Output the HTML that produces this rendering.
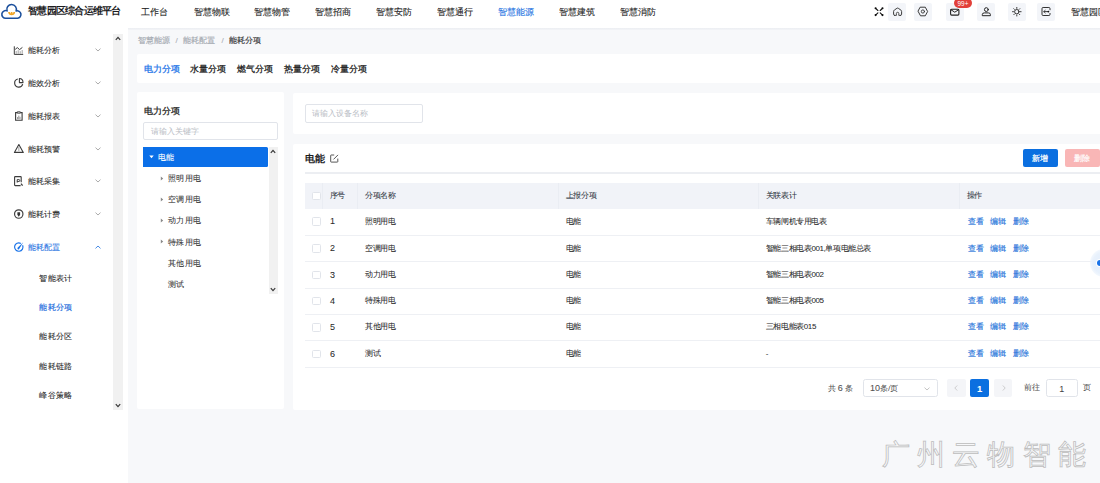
<!DOCTYPE html>
<html><head><meta charset="utf-8">
<style>
html,body{margin:0;padding:0;width:1100px;height:483px;overflow:hidden;background:#fff;font-family:"Liberation Sans",sans-serif;}
.a{position:absolute;}
.t{position:absolute;white-space:nowrap;line-height:12px;}
#hdr{left:0;top:0;width:1100px;height:28px;background:#fff;}
.nav{font-size:9.17px;color:#222;-webkit-text-stroke-width:0.1px;}
.ibox{position:absolute;top:2.6px;width:18px;height:18px;background:#f3f5f9;border-radius:2px;}
.ibox svg{position:absolute;left:3px;top:3px;}
#side{left:0;top:28px;width:128px;height:455px;background:#fff;}
.mi{font-size:8.1px;color:#2a2a2a;-webkit-text-stroke-width:0.08px;}
.chev{position:absolute;}
#main{left:128px;top:28px;width:972px;height:455px;background:#f7f8fa;}
.card{position:absolute;background:#fff;border-radius:2px;}
.bc{font-size:8.1px;color:#a3a8b0;-webkit-text-stroke-width:0.15px;}
.tab{font-size:9.17px;color:#1a1a1a;-webkit-text-stroke-width:0.25px;}
.tr{font-size:8.1px;letter-spacing:0.25px;color:#3a3a3a;-webkit-text-stroke-width:0.08px;}
.th{font-size:8.02px;color:#2d3440;-webkit-text-stroke-width:0.05px;letter-spacing:-0.3px;}
.td{font-size:8.02px;color:#2a2a2a;-webkit-text-stroke-width:0.05px;letter-spacing:-0.4px;}
.op{font-size:8.02px;color:#1a6fd9;-webkit-text-stroke-width:0.12px;}
.cb{position:absolute;left:312.2px;width:8.6px;height:8.6px;border:0.7px solid #e1e4ea;border-radius:1.5px;box-sizing:border-box;background:#fff;}
.rowline{position:absolute;left:305.3px;width:795px;height:0.8px;background:#eef0f4;}
.colsep{position:absolute;top:183px;width:0.8px;height:25.6px;background:#eaedf3;}
</style></head>
<body>
<!-- HEADER -->
<div id="hdr" class="a">
  <svg class="a" style="left:0px;top:0px" width="24" height="22" viewBox="0 0 24 22">
    <path d="M5.8 18.2 A3.8 3.8 0 1 1 7.1 10.9 A4.8 4.8 0 1 1 16.1 11 A3.7 3.7 0 1 1 17.6 18.2 Z" fill="none" stroke="#1b4f9c" stroke-width="1.55" stroke-linejoin="round"/>
    <path d="M8.1 11.9 L15.2 11.9 A3.6 3.9 0 0 1 8.1 11.9 Z" fill="#f0a322"/>
    <path d="M10.3 11.6 L10.6 13.3 M13 11.6 L12.7 13.3" stroke="#fff" stroke-width="0.8"/>
  </svg>
  <div class="t" style="left:28px;top:5px;font-size:10px;letter-spacing:-0.75px;font-weight:bold;color:#1d1d1f;">智慧园区综合运维平台</div>
  <div class="t nav" style="left:141px;top:6px">工作台</div>
  <div class="t nav" style="left:193.5px;top:6px">智慧物联</div>
  <div class="t nav" style="left:254.3px;top:6px">智慧物管</div>
  <div class="t nav" style="left:315px;top:6px">智慧招商</div>
  <div class="t nav" style="left:376.2px;top:6px">智慧安防</div>
  <div class="t nav" style="left:437px;top:6px">智慧通行</div>
  <div class="t nav" style="left:498px;top:6px;color:#1a6fdf">智慧能源</div>
  <div class="t nav" style="left:558.8px;top:6px">智慧建筑</div>
  <div class="t nav" style="left:619.5px;top:6px">智慧消防</div>

  <!-- header icons -->
  <div class="ibox" style="left:888.2px;width:17.9px;height:18px"></div>
  <div class="ibox" style="left:914.3px;width:17.9px;height:18px"></div>
  <div class="ibox" style="left:945.8px;width:17.8px;height:18px"></div>
  <div class="ibox" style="left:977.3px;width:17.6px;height:18px"></div>
  <div class="ibox" style="left:1007.8px;width:17.8px;height:18px"></div>
  <div class="ibox" style="left:1037px;width:17.7px;height:18px"></div>
  <svg class="a" style="left:860px;top:0" width="200" height="28" viewBox="860 0 200 28">
   <g stroke="#111" stroke-linecap="round" fill="none">
    <path d="M875.6 8.3 L877.9 10.5 M882.5 8.3 L880.2 10.5 M875.6 15.1 L877.9 12.9 M882.5 15.1 L880.2 12.9" stroke-width="1.1"/>
   </g>
   <g fill="#111">
    <circle cx="875.6" cy="8.3" r="1.05"/><circle cx="882.5" cy="8.3" r="1.05"/>
    <circle cx="875.6" cy="15.1" r="1.05"/><circle cx="882.5" cy="15.1" r="1.05"/>
   </g>
   <g fill="none" stroke="#3a3a3a" stroke-width="1" stroke-linejoin="round" stroke-linecap="round">
    <path d="M894.6 15.4 Q893.6 15.4 893.6 14.3 L893.6 11.4 Q893.6 10.6 894.3 10.1 L896.9 8.3 Q897.6 7.8 898.3 8.3 L900.9 10.1 Q901.6 10.6 901.6 11.4 L901.6 14.3 Q901.6 15.4 900.6 15.4"/>
    <path d="M894.6 15.4 L896.4 15.4 L896.4 13.4 Q896.4 12.3 897.6 12.3 Q898.8 12.3 898.8 13.4 L898.8 15.4 L900.6 15.4" stroke-width="0.9"/>
    <path d="M920.5 7.2 L925.3 7.2 L927.6 11.5 L925.3 15.8 L920.5 15.8 L918.2 11.5 Z"/>
    <circle cx="922.9" cy="11.5" r="1.6" stroke-width="0.95"/>
    <rect x="950.6" y="9.2" width="8.3" height="5.9" rx="1" stroke="#222" stroke-width="1.1"/>
    <path d="M951 9.8 L954.75 12.2 L958.5 9.8" stroke="#222" stroke-width="1"/>
    <circle cx="986.35" cy="9.6" r="1.9" stroke="#222"/>
    <path d="M982.3 15.3 L982.3 14.6 Q982.3 12.9 984.3 12.9 L988.4 12.9 Q990.4 12.9 990.4 14.6 L990.4 15.3 Z" stroke="#222"/>
    <circle cx="1016.8" cy="11.7" r="2.2" stroke="#333"/>
    <path d="M1016.8 7.4 L1016.8 8.4 M1016.8 15 L1016.8 16 M1012.5 11.7 L1013.5 11.7 M1020.1 11.7 L1021.1 11.7 M1013.8 8.7 L1014.5 9.4 M1019.1 14 L1019.8 14.7 M1013.8 14.7 L1014.5 14 M1019.1 9.4 L1019.8 8.7" stroke="#333" stroke-width="0.95"/>
    <path d="M1050 9.8 L1050 8.6 Q1050 7.5 1048.9 7.5 L1043.1 7.5 Q1042 7.5 1042 8.6 L1042 14.4 Q1042 15.5 1043.1 15.5 L1048.9 15.5 Q1050 15.5 1050 14.4 L1050 13.4" stroke="#333"/>
    <path d="M1043.8 11.6 L1048.6 11.6" stroke="#333" stroke-width="0.95"/>
    <path d="M1045.2 10.3 L1043.8 11.6 L1045.2 12.9" stroke="#333" stroke-width="0.9"/>
   </g>
   <circle cx="1048.4" cy="11.6" r="0.9" fill="#111"/>
  </svg>
  <div class="a" style="left:953.9px;top:-1.6px;width:18.3px;height:9.5px;border-radius:5px;background:#e2403a;color:#fff;font-size:6.4px;line-height:11.2px;text-align:center;letter-spacing:0.1px">99+</div>
  <div class="t nav" style="left:1071.4px;top:6.3px;font-size:8.6px">智慧园区</div>
</div>

<!-- SIDEBAR -->
<div id="side" class="a"></div>
<div class="a" style="left:112.5px;top:34px;width:10px;height:375.5px;background:#f1f1f1"></div>
<svg class="a" style="left:114.5px;top:36px" width="6" height="5" viewBox="0 0 6 5"><path d="M0.8 3.8 L3 1.4 L5.2 3.8" fill="none" stroke="#3a3a3a" stroke-width="1.25"/></svg>
<svg class="a" style="left:114.5px;top:402.5px" width="6" height="5" viewBox="0 0 6 5"><path d="M0.8 1.2 L3 3.6 L5.2 1.2" fill="none" stroke="#3a3a3a" stroke-width="1.25"/></svg>

<!-- menu icons -->
<svg class="a" style="left:0;top:0" width="30" height="260" viewBox="0 0 30 260">
 <g fill="none" stroke="#3c3c3c" stroke-width="1">
  <path d="M14.3 46.3 L14.3 54.4 L23.2 54.4"/>
  <path d="M15.2 49.4 L17.3 47.6 L19.6 49.6 L22.4 47.4"/>
  <path d="M16.2 53.8 L16.2 51 M18.2 53.8 L18.2 50.2 M20.2 53.8 L20.2 51.2 M22.2 53.8 L22.2 50" stroke="#9a9a9a" stroke-width="0.9"/>
  <path d="M17.8 79 A4.1 4.1 0 1 0 22.7 84.1" stroke-width="1.15"/>
  <path d="M19.4 78.5 L19.4 82.6 L23 82.6 Q23 78.5 19.4 78.5 Z" stroke-width="1.1" stroke-linejoin="round"/>
  <path d="M17.2 112.6 L15.6 112.6 L15.6 120.2 L22.1 120.2 L22.1 112.6 L20.4 112.6" stroke-width="1.1"/>
  <path d="M17.3 111.8 L20.3 111.8 L20.3 113.2 L17.3 113.2 Z" stroke-width="0.9"/>
  <path d="M17.6 119.2 L17.6 117 M18.8 119.2 L18.8 115.6 M20 119.2 L20 116.8" stroke="#8a8a8a" stroke-width="0.9"/>
  <path d="M18.85 144.6 L23.3 152.4 L14.4 152.4 Z" stroke-width="1.1" stroke-linejoin="round"/>
  <path d="M18.85 147 L18.85 151" stroke="#9a9a9a" stroke-width="0.9"/>
  <path d="M20.6 185.6 L15.2 185.6 Q14.6 185.6 14.6 185 L14.6 177.2 Q14.6 176.6 15.2 176.6 L20.6 176.6 Q21.2 176.6 21.2 177.2 L21.2 182.2" stroke-width="1.1"/>
  <path d="M17.2 182.6 L17.2 179.6 L18.9 179.6 Q19.8 179.6 19.8 180.6 Q19.8 181.5 18.9 181.5 L17.2 181.5" stroke-width="1"/>
  <path d="M21 183.6 L22.6 185.6" stroke-width="1.3"/>
  <circle cx="18.75" cy="214" r="4.2" stroke-width="1.15"/>
 </g>
 <path d="M17.4 212.2 L20.1 212.2 L20.1 214.8 L18.75 216.8 L17.4 214.8 Z" fill="#333"/>
 <path d="M20.85 243.4 A4.2 4.2 0 1 0 22.6 245.3" fill="none" stroke="#1a73e8" stroke-width="1.2"/>
 <path d="M17.3 248 L23.3 242.3 L18.8 249.5 Q17.6 249.6 17.3 248 Z" fill="#1a73e8"/>
</svg>
<div class="t mi" style="left:28px;top:45px">能耗分析</div>
<div class="t mi" style="left:28px;top:77.9px">能效分析</div>
<div class="t mi" style="left:28px;top:110.5px">能耗报表</div>
<div class="t mi" style="left:28px;top:143.5px">能耗预警</div>
<div class="t mi" style="left:28px;top:176px">能耗采集</div>
<div class="t mi" style="left:28px;top:208.5px">能耗计费</div>
<div class="t mi" style="left:28px;top:241.5px;color:#1a6fdf">能耗配置</div>

<svg class="a" style="left:94.5px;top:48px" width="6" height="4" viewBox="0 0 6 4"><path d="M0.5 0.6 L3 3 L5.5 0.6" fill="none" stroke="#888" stroke-width="0.7"/></svg>
<svg class="a" style="left:94.5px;top:81px" width="6" height="4" viewBox="0 0 6 4"><path d="M0.5 0.6 L3 3 L5.5 0.6" fill="none" stroke="#888" stroke-width="0.7"/></svg>
<svg class="a" style="left:94.5px;top:113.5px" width="6" height="4" viewBox="0 0 6 4"><path d="M0.5 0.6 L3 3 L5.5 0.6" fill="none" stroke="#888" stroke-width="0.7"/></svg>
<svg class="a" style="left:94.5px;top:146.5px" width="6" height="4" viewBox="0 0 6 4"><path d="M0.5 0.6 L3 3 L5.5 0.6" fill="none" stroke="#888" stroke-width="0.7"/></svg>
<svg class="a" style="left:94.5px;top:179px" width="6" height="4" viewBox="0 0 6 4"><path d="M0.5 0.6 L3 3 L5.5 0.6" fill="none" stroke="#888" stroke-width="0.7"/></svg>
<svg class="a" style="left:94.5px;top:211.5px" width="6" height="4" viewBox="0 0 6 4"><path d="M0.5 0.6 L3 3 L5.5 0.6" fill="none" stroke="#888" stroke-width="0.7"/></svg>
<svg class="a" style="left:94.5px;top:244.5px" width="6" height="4" viewBox="0 0 6 4"><path d="M0.5 3.4 L3 1 L5.5 3.4" fill="none" stroke="#1a6fdf" stroke-width="0.8"/></svg>

<div class="t mi" style="left:39.3px;top:273px;font-size:7.6px;letter-spacing:0.25px">智能表计</div>
<div class="t mi" style="left:39.3px;top:301.6px;font-size:7.6px;letter-spacing:0.25px;color:#1668dc;-webkit-text-stroke-width:0.15px">能耗分项</div>
<div class="t mi" style="left:39.3px;top:330.7px;font-size:7.6px;letter-spacing:0.25px">能耗分区</div>
<div class="t mi" style="left:39.3px;top:360.8px;font-size:7.6px;letter-spacing:0.25px">能耗链路</div>
<div class="t mi" style="left:39.3px;top:389.9px;font-size:7.6px;letter-spacing:0.25px">峰谷策略</div>

<!-- MAIN -->
<div id="main" class="a"></div>
<div class="a" style="left:128px;top:28px;width:972px;height:2px;background:linear-gradient(#eceef2,#f3f4f7)"></div>
<div class="t bc" style="left:137.9px;top:35.3px">智慧能源</div>
<div class="t bc" style="left:175.6px;top:35.3px;color:#b0b4ba">/</div>
<div class="t bc" style="left:183.4px;top:35.3px">能耗配置</div>
<div class="t bc" style="left:221.4px;top:35.3px;color:#b0b4ba">/</div>
<div class="t bc" style="left:229px;top:35.3px;color:#303133">能耗分项</div>

<div class="card" style="left:137.2px;top:53.8px;width:980px;height:29px"></div>
<div class="t tab" style="left:143.5px;top:63.2px;color:#1a73e8">电力分项</div>
<div class="t tab" style="left:190px;top:63.2px">水量分项</div>
<div class="t tab" style="left:236.6px;top:63.2px">燃气分项</div>
<div class="t tab" style="left:283.6px;top:63.2px">热量分项</div>
<div class="t tab" style="left:330.5px;top:63.2px">冷量分项</div>

<!-- tree card -->
<div class="card" style="left:137.2px;top:92px;width:147.2px;height:317px"></div>
<div class="t tab" style="left:143.5px;top:104.8px;font-size:9px;color:#222">电力分项</div>
<div class="a" style="left:143.3px;top:121.8px;width:135.2px;height:18.5px;border:0.8px solid #e1e4ea;border-radius:2px;box-sizing:border-box"></div>
<div class="t" style="left:150.5px;top:125.6px;font-size:7.6px;color:#b8bcc4">请输入关键字</div>
<div class="a" style="left:143.3px;top:146.5px;width:124.8px;height:20.7px;background:#0b6fe8;border-radius:0 1.5px 1.5px 0"></div>
<svg class="a" style="left:148.5px;top:155px" width="5" height="4" viewBox="0 0 5 4"><path d="M0.3 0.6 L4.7 0.6 L2.5 3.3 Z" fill="#fff"/></svg>
<div class="t tr" style="left:157.8px;top:151.5px;color:#fff">电能</div>
<div class="a" style="left:268.5px;top:146.5px;width:9.8px;height:147.1px;background:#f1f1f1"></div>
<svg class="a" style="left:270.4px;top:148.8px" width="6" height="5" viewBox="0 0 6 5"><path d="M0.8 3.8 L3 1.4 L5.2 3.8" fill="none" stroke="#3a3a3a" stroke-width="1.25"/></svg>
<svg class="a" style="left:270.4px;top:286.8px" width="6" height="5" viewBox="0 0 6 5"><path d="M0.8 1.2 L3 3.6 L5.2 1.2" fill="none" stroke="#3a3a3a" stroke-width="1.25"/></svg>

<svg class="a" style="left:159.6px;top:175.6px" width="4" height="5" viewBox="0 0 4 5"><path d="M0.8 0.4 L3.2 2.5 L0.8 4.6 Z" fill="#888"/></svg>
<svg class="a" style="left:159.6px;top:196.7px" width="4" height="5" viewBox="0 0 4 5"><path d="M0.8 0.4 L3.2 2.5 L0.8 4.6 Z" fill="#888"/></svg>
<svg class="a" style="left:159.6px;top:218.2px" width="4" height="5" viewBox="0 0 4 5"><path d="M0.8 0.4 L3.2 2.5 L0.8 4.6 Z" fill="#888"/></svg>
<svg class="a" style="left:159.6px;top:239.3px" width="4" height="5" viewBox="0 0 4 5"><path d="M0.8 0.4 L3.2 2.5 L0.8 4.6 Z" fill="#888"/></svg>
<div class="t tr" style="left:168.1px;top:172.8px">照明用电</div>
<div class="t tr" style="left:168.1px;top:193.9px">空调用电</div>
<div class="t tr" style="left:168.1px;top:215.4px">动力用电</div>
<div class="t tr" style="left:168.1px;top:236.5px">特殊用电</div>
<div class="t tr" style="left:168.1px;top:257.6px">其他用电</div>
<div class="t tr" style="left:168.1px;top:278.5px">测试</div>

<!-- search card -->
<div class="card" style="left:293.3px;top:92.7px;width:820px;height:41.6px"></div>
<div class="a" style="left:305.3px;top:104.3px;width:117.4px;height:18.6px;border:0.8px solid #e1e4ea;border-radius:2px;box-sizing:border-box"></div>
<div class="t" style="left:311.9px;top:108.1px;font-size:7.6px;color:#b8bcc4">请输入设备名称</div>

<!-- table card -->
<div class="card" style="left:293.3px;top:144px;width:820px;height:265.5px"></div>
<div class="t" style="left:305.3px;top:153px;font-size:9.6px;font-weight:bold;color:#1d1d1f">电能</div>
<svg class="a" style="left:329.5px;top:153.8px" width="9" height="9" viewBox="0 0 9 9"><path d="M4.2 1 L1.2 1 Q0.7 1 0.7 1.5 L0.7 7.6 Q0.7 8.1 1.2 8.1 L7.3 8.1 Q7.8 8.1 7.8 7.6 L7.8 4.6" fill="none" stroke="#444" stroke-width="0.9"/><path d="M3.5 5.4 L8 0.9" stroke="#444" stroke-width="0.9"/></svg>
<div class="a" style="left:1022.8px;top:148.7px;width:35.2px;height:18.6px;background:#0b6fe0;border-radius:2px;color:#fff;font-size:8.02px;line-height:19.6px;text-align:center;-webkit-text-stroke-width:0.2px">新增</div>
<div class="a" style="left:1064.8px;top:148.7px;width:35.2px;height:18.6px;background:#f9b6b6;border-radius:2px;color:#fff;font-size:8.02px;line-height:19.6px;text-align:center;-webkit-text-stroke-width:0.2px">删除</div>
<div class="a" style="left:305.3px;top:172.4px;width:800px;height:1.4px;background:#eceef2"></div>

<div class="a" style="left:305.3px;top:183px;width:800px;height:25.6px;background:#f1f3f8"></div>
<div class="colsep" style="left:321.6px"></div>
<div class="colsep" style="left:357.2px"></div>
<div class="colsep" style="left:557.9px"></div>
<div class="colsep" style="left:757.9px"></div>
<div class="colsep" style="left:958.7px"></div>
<div class="cb" style="top:191.8px"></div>
<div class="t th" style="left:329.8px;top:190px">序号</div>
<div class="t th" style="left:365px;top:190px">分项名称</div>
<div class="t th" style="left:565.6px;top:190px">上报分项</div>
<div class="t th" style="left:765.8px;top:190px">关联表计</div>
<div class="t th" style="left:966.5px;top:190px">操作</div>

<!-- rows -->
<div class="cb" style="top:217.4px"></div>
<div class="t td" style="left:330px;top:215.4px;font-size:9px">1</div>
<div class="t td" style="left:365px;top:215.6px">照明用电</div>
<div class="t td" style="left:565.6px;top:215.6px">电能</div>
<div class="t td" style="left:765.8px;top:215.6px">车辆闸机专用电表</div>
<div class="t op" style="left:968.4px;top:215.6px">查看</div>
<div class="t op" style="left:990.3px;top:215.6px">编辑</div>
<div class="t op" style="left:1012.5px;top:215.6px">删除</div>
<div class="rowline" style="top:234.8px"></div>

<div class="cb" style="top:244.3px"></div>
<div class="t td" style="left:330px;top:242.3px;font-size:9px">2</div>
<div class="t td" style="left:365px;top:242.5px">空调用电</div>
<div class="t td" style="left:565.6px;top:242.5px">电能</div>
<div class="t td" style="left:765.8px;top:242.5px">智能三相电表001,单项电能总表</div>
<div class="t op" style="left:968.4px;top:242.5px">查看</div>
<div class="t op" style="left:990.3px;top:242.5px">编辑</div>
<div class="t op" style="left:1012.5px;top:242.5px">删除</div>
<div class="rowline" style="top:261.2px"></div>

<div class="cb" style="top:270.5px"></div>
<div class="t td" style="left:330px;top:268.5px;font-size:9px">3</div>
<div class="t td" style="left:365px;top:268.7px">动力用电</div>
<div class="t td" style="left:565.6px;top:268.7px">电能</div>
<div class="t td" style="left:765.8px;top:268.7px">智能三相电表002</div>
<div class="t op" style="left:968.4px;top:268.7px">查看</div>
<div class="t op" style="left:990.3px;top:268.7px">编辑</div>
<div class="t op" style="left:1012.5px;top:268.7px">删除</div>
<div class="rowline" style="top:287.5px"></div>

<div class="cb" style="top:296.6px"></div>
<div class="t td" style="left:330px;top:294.6px;font-size:9px">4</div>
<div class="t td" style="left:365px;top:294.8px">特殊用电</div>
<div class="t td" style="left:565.6px;top:294.8px">电能</div>
<div class="t td" style="left:765.8px;top:294.8px">智能三相电表005</div>
<div class="t op" style="left:968.4px;top:294.8px">查看</div>
<div class="t op" style="left:990.3px;top:294.8px">编辑</div>
<div class="t op" style="left:1012.5px;top:294.8px">删除</div>
<div class="rowline" style="top:313.9px"></div>

<div class="cb" style="top:323.1px"></div>
<div class="t td" style="left:330px;top:321.1px;font-size:9px">5</div>
<div class="t td" style="left:365px;top:321.3px">其他用电</div>
<div class="t td" style="left:565.6px;top:321.3px">电能</div>
<div class="t td" style="left:765.8px;top:321.3px">三相电能表015</div>
<div class="t op" style="left:968.4px;top:321.3px">查看</div>
<div class="t op" style="left:990.3px;top:321.3px">编辑</div>
<div class="t op" style="left:1012.5px;top:321.3px">删除</div>
<div class="rowline" style="top:340.2px"></div>

<div class="cb" style="top:349.5px"></div>
<div class="t td" style="left:330px;top:347.5px;font-size:9px">6</div>
<div class="t td" style="left:365px;top:347.7px">测试</div>
<div class="t td" style="left:565.6px;top:347.7px">电能</div>
<div class="t td" style="left:765.8px;top:347.7px">-</div>
<div class="t op" style="left:968.4px;top:347.7px">查看</div>
<div class="t op" style="left:990.3px;top:347.7px">编辑</div>
<div class="t op" style="left:1012.5px;top:347.7px">删除</div>
<div class="rowline" style="top:366.5px"></div>

<!-- pagination -->
<div class="t" style="left:827.5px;top:382.3px;font-size:8.02px;color:#505050;-webkit-text-stroke-width:0.05px">共 <span style="font-size:9px">6</span> 条</div>
<div class="a" style="left:862.7px;top:378.6px;width:74.9px;height:18.9px;border:0.8px solid #e1e4ea;border-radius:2.5px;box-sizing:border-box"></div>
<div class="t" style="left:870px;top:382.3px;font-size:8.02px;color:#505050;-webkit-text-stroke-width:0.05px"><span style="font-size:9px">10</span>条/页</div>
<svg class="a" style="left:923.5px;top:386.6px" width="6" height="4" viewBox="0 0 6 4"><path d="M0.5 0.6 L3 3 L5.5 0.6" fill="none" stroke="#aaa" stroke-width="0.7"/></svg>
<div class="a" style="left:947.2px;top:378.9px;width:18.4px;height:18.4px;background:#f4f5f8;border-radius:2px"></div>
<svg class="a" style="left:954px;top:385px" width="4" height="6" viewBox="0 0 4 6"><path d="M3.2 0.5 L0.8 3 L3.2 5.5" fill="none" stroke="#bbb" stroke-width="0.7"/></svg>
<div class="a" style="left:970.3px;top:378.6px;width:18.9px;height:18.8px;background:#0b6fe0;border-radius:2px;color:#fff;font-size:9.5px;font-weight:bold;line-height:19.2px;text-align:center">1</div>
<div class="a" style="left:994.1px;top:378.9px;width:18.4px;height:18.4px;background:#f4f5f8;border-radius:2px"></div>
<svg class="a" style="left:1001.5px;top:385px" width="4" height="6" viewBox="0 0 4 6"><path d="M0.8 0.5 L3.2 3 L0.8 5.5" fill="none" stroke="#bbb" stroke-width="0.7"/></svg>
<div class="t" style="left:1024.4px;top:382.3px;font-size:8.02px;color:#505050;-webkit-text-stroke-width:0.05px">前往</div>
<div class="a" style="left:1045.5px;top:378.6px;width:32.7px;height:18.9px;border:0.8px solid #e1e4ea;border-radius:2.5px;box-sizing:border-box;font-size:9px;color:#444;line-height:18px;text-align:center">1</div>
<div class="t" style="left:1083.3px;top:382.3px;font-size:8.02px;color:#505050;-webkit-text-stroke-width:0.05px">页</div>

<!-- floating circle -->
<div class="a" style="left:1090px;top:248.5px;width:28px;height:28px;border-radius:50%;background:radial-gradient(circle at 50% 50%,#e3eefc 0,#e8f1fc 55%,rgba(240,246,253,0.6) 75%,rgba(255,255,255,0) 100%)"></div>
<div class="a" style="left:1096.6px;top:259.6px;width:6px;height:6px;border-radius:50%;background:#1a73e8;box-shadow:0 0 0 1px #fff"></div>

<!-- watermark -->
<div class="t" style="left:881.5px;top:437px;font-size:28px;line-height:36px;letter-spacing:7.3px;color:transparent;-webkit-text-stroke:0.75px #bcbcbc">广州云物智能</div>
</body></html>
